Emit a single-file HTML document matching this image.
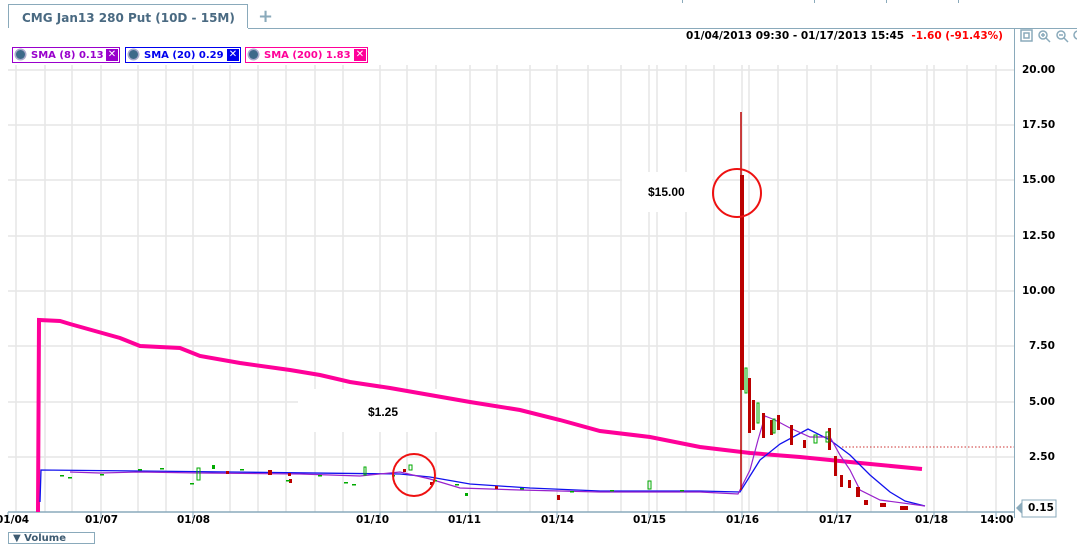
<!DOCTYPE html>
<html><head><meta charset="utf-8"><style>
body{margin:0;width:1077px;height:541px;background:#fff;overflow:hidden;position:relative;font-family:"DejaVu Sans","Liberation Sans",sans-serif}
.tab{position:absolute;left:8px;top:4px;width:240px;height:24px;border:1px solid #8aaabb;border-bottom:none;background:#fff;color:#4a6a82;font-weight:bold;font-size:12px;line-height:26px;padding-left:13px;box-sizing:border-box;white-space:nowrap}
.plus{position:absolute;left:258px;top:6px;color:#8aaabb;font-size:18px;font-weight:bold}
.leg{position:absolute;top:47px;height:16px;border:1px solid;font-size:10px;font-weight:bold;line-height:15px;padding-left:18px;box-sizing:border-box;white-space:nowrap;overflow:hidden}
.leg i{position:absolute;left:3px;top:2px;width:9px;height:9px;border-radius:50%;background:#3d6a8a;box-shadow:0 0 0 1.5px #aac}
.leg b{position:absolute;right:1px;top:1px;width:12px;height:12px;color:#fff;font-size:10px;line-height:12px;text-align:center}
.ax{position:absolute;font-size:10.5px;font-weight:bold;color:#000;white-space:nowrap}
</style></head><body>
<div style="position:absolute;left:248px;top:28px;width:829px;border-top:1px solid #8aaabb"></div>
<div class="tab">CMG Jan13 280 Put (10D - 15M)</div>
<div class="plus">+</div>
<div style="position:absolute;left:682px;top:0;width:1px;height:3px;background:#8aaabb"></div>
<div style="position:absolute;left:814px;top:0;width:1px;height:3px;background:#8aaabb"></div>
<div style="position:absolute;left:886px;top:0;width:1px;height:3px;background:#8aaabb"></div>
<div style="position:absolute;left:958px;top:0;width:1px;height:3px;background:#8aaabb"></div>
<div style="position:absolute;left:1014px;top:28px;width:1px;height:490px;background:#8aaabb"></div>
<div class="leg" style="left:12px;width:108px;border-color:#9900cc;color:#9900cc"><i></i>SMA (8) 0.13<b style="background:#9900cc">✕</b></div>
<div class="leg" style="left:125px;width:116px;border-color:#0000ee;color:#0000ee"><i></i>SMA (20) 0.29<b style="background:#0000ee">✕</b></div>
<div class="leg" style="left:245px;width:123px;border-color:#ff0099;color:#ff0099"><i></i>SMA (200) 1.83<b style="background:#ff0099">✕</b></div>
<div class="ax" style="left:686px;top:30px">01/04/2013 09:30 - 01/17/2013 15:45 <span style="color:#f00">&nbsp;-1.60 (-91.43%)</span></div>
<svg width="1077" height="541" style="position:absolute;left:0;top:0" xmlns="http://www.w3.org/2000/svg">
<g stroke="#e6e6e6" stroke-width="1.5">
<path d="M8 70H1014M8 125H1014M8 180H1014M8 236H1014M8 291H1014M8 346H1014M8 402H1014M8 457H1014"/>
<path d="M16 65V512M45 65V512M72 65V512M101 65V512M138 65V512M166 65V512M193 65V512M230 65V512M258 65V512M286 65V512M315 65V512M343 65V512M380 65V512M407 65V512M436 65V512M470 65V512M497 65V512M530 65V512M557 65V512M588 65V512M621 65V512M649 65V512M657 65V512M686 65V512M714 65V512M742 65V512M749 65V512M778 65V512M807 65V512M837 65V512M871 65V512M927 65V512M934 65V512M967 65V512M996 65V512"/>
</g>
<rect x="622" y="172" width="90" height="40" fill="#fff"/>
<rect x="298" y="389" width="170" height="43" fill="#fff"/>
<path d="M8 512H1014" stroke="#8aaabb" stroke-width="1.5"/>
<path d="M8 512V518M101 512V518M193 512V518M380 512V518M470 512V518M557 512V518M649 512V518M742 512V518M837 512V518M934 512V518M996 512V518" stroke="#8aaabb"/>
<path d="M38 512L39 320L60 321L70 324L95 331L120 338L140 346L180 348L200 356L240 363L290 370L320 375L350 382L390 388L470 402L520 410L560 420L600 431L650 437L700 447L750 453L800 457L860 463L922 469" fill="none" stroke="#ff0099" stroke-width="4"/>
<path d="M40 502L41 470L140 471L400 474L430 477L470 484L530 488L600 491L700 491L740 492L760 460L780 444L808 429L830 440L850 455L870 475L890 492L905 501L925 506" fill="none" stroke="#1111ee" stroke-width="1.3"/>
<path d="M70 472L100 473L140 472L200 473L300 474L360 476L400 472L430 479L460 488L520 490L600 492L700 492L738 494L750 470L758 440L765 416L775 420L790 428L810 437L830 437L840 455L850 470L860 490L880 500L925 506" fill="none" stroke="#9922cc" stroke-width="1.2"/>
<path d="M741 112V490" stroke="#bb0000" stroke-width="1.5"/>
<rect x="740" y="175" width="4" height="215" fill="#bb0000"/>
<g fill="#bb0000"><rect x="748" y="378" width="3" height="55"/><rect x="752" y="400" width="3" height="30"/><rect x="762" y="413" width="3" height="25"/><rect x="770" y="420" width="3" height="15"/><rect x="777" y="415" width="3" height="15"/><rect x="790" y="425" width="3" height="20"/><rect x="803" y="440" width="3" height="8"/><rect x="828" y="428" width="3" height="22"/><rect x="834" y="456" width="3" height="20"/><rect x="840" y="475" width="3" height="12"/><rect x="848" y="480" width="3" height="8"/><rect x="856" y="487" width="4" height="10"/><rect x="864" y="500" width="4" height="5"/><rect x="880" y="503" width="6" height="4"/><rect x="900" y="506" width="8" height="4"/><rect x="268" y="470" width="4" height="5"/><rect x="289" y="479" width="3" height="4"/><rect x="557" y="495" width="3" height="5"/><rect x="403" y="469" width="3" height="3"/><rect x="226" y="471" width="3" height="3"/><rect x="288" y="473" width="3" height="3"/><rect x="430" y="482" width="3" height="3"/><rect x="495" y="486" width="3" height="3"/></g>
<g fill="#00aa00"><rect x="60" y="475" width="4" height="1.5"/><rect x="68" y="477" width="4" height="1.5"/><rect x="100" y="474" width="4" height="1.5"/><rect x="138" y="469" width="4" height="1.5"/><rect x="160" y="468" width="4" height="1.5"/><rect x="190" y="483" width="4" height="1.5"/><rect x="212" y="465" width="3" height="4"/><rect x="240" y="469" width="4" height="1.5"/><rect x="286" y="480" width="4" height="1.5"/><rect x="318" y="475" width="4" height="1.5"/><rect x="344" y="482" width="4" height="1.5"/><rect x="352" y="484" width="4" height="1.5"/><rect x="392" y="475" width="3" height="1.5"/><rect x="433" y="480" width="4" height="1.5"/><rect x="455" y="484" width="4" height="1.5"/><rect x="465" y="493" width="3" height="3"/><rect x="520" y="488" width="4" height="1.5"/><rect x="570" y="491" width="4" height="1.5"/><rect x="610" y="490" width="4" height="1.5"/><rect x="680" y="490" width="4" height="1.5"/></g>
<g fill="none" stroke="#00aa00" stroke-width="1"><rect x="745" y="368" width="2" height="25"/><rect x="757" y="403" width="2" height="20"/><rect x="773" y="419" width="2" height="14"/><rect x="814" y="435" width="3" height="8"/><rect x="826" y="432" width="3" height="10"/><rect x="197" y="468" width="3" height="12"/><rect x="364" y="467" width="2" height="8"/><rect x="409" y="465" width="3" height="5"/><rect x="648" y="481" width="3" height="8"/></g>
<circle cx="737" cy="193" r="24" fill="none" stroke="#ee1111" stroke-width="2"/>
<circle cx="414" cy="475" r="21" fill="none" stroke="#ee1111" stroke-width="2"/>
<path d="M842 447H1014" stroke="#cc3333" stroke-dasharray="1.5 2"/>
<text x="648" y="196" font-family="Liberation Sans Narrow,Liberation Sans,sans-serif" font-size="12" font-weight="bold">$15.00</text>
<text x="368" y="416" font-family="Liberation Sans Narrow,Liberation Sans,sans-serif" font-size="12" font-weight="bold">$1.25</text>
<path d="M1016 508L1022 502V514Z" fill="#8aaabb"/>
<rect x="1022" y="500" width="34" height="17" fill="#fff" stroke="#8aaabb"/>
<g fill="none" stroke="#8aaabb" stroke-width="1.5"><rect x="1021" y="30" width="11" height="11"/><rect x="1024" y="33" width="5" height="5"/><circle cx="1043" cy="35" r="4"/><path d="M1046 38L1050 42M1041 35H1045M1043 33V37"/><circle cx="1061" cy="35" r="4"/><path d="M1064 38L1068 42M1059 35H1063"/><circle cx="1078" cy="35" r="4"/></g>
</svg>
<div class="ax" style="left:1022px;top:64px">20.00</div>
<div class="ax" style="left:1022px;top:119px">17.50</div>
<div class="ax" style="left:1022px;top:174px">15.00</div>
<div class="ax" style="left:1022px;top:230px">12.50</div>
<div class="ax" style="left:1022px;top:285px">10.00</div>
<div class="ax" style="left:1029px;top:340px">7.50</div>
<div class="ax" style="left:1029px;top:396px">5.00</div>
<div class="ax" style="left:1029px;top:451px">2.50</div>
<div class="ax" style="left:1028px;top:502px">0.15</div>
<div class="ax" style="left:-4px;top:514px">01/04</div>
<div class="ax" style="left:85px;top:514px">01/07</div>
<div class="ax" style="left:177px;top:514px">01/08</div>
<div class="ax" style="left:356px;top:514px">01/10</div>
<div class="ax" style="left:448px;top:514px">01/11</div>
<div class="ax" style="left:541px;top:514px">01/14</div>
<div class="ax" style="left:633px;top:514px">01/15</div>
<div class="ax" style="left:726px;top:514px">01/16</div>
<div class="ax" style="left:819px;top:514px">01/17</div>
<div class="ax" style="left:915px;top:514px">01/18</div>
<div class="ax" style="left:980px;top:514px">14:00</div>
<div style="position:absolute;left:8px;top:532px;width:87px;height:12px;border:1px solid #8aaabb;font-size:10px;font-weight:bold;color:#3d5a70;padding-left:4px;box-sizing:border-box;line-height:12px">▼ Volume</div>
</body></html>
